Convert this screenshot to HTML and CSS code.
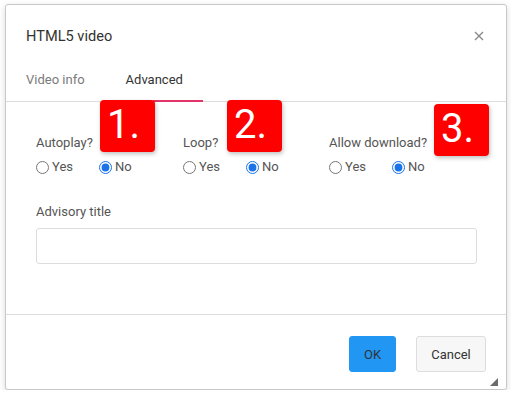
FILE: index.html
```html
<!DOCTYPE html>
<html lang="en">
<head>
  <meta charset="UTF-8" />
  <title>HTML5 video</title>
  <link rel="stylesheet" href="styles.css">
</head>
<body>

<div class="dialog">
  <div class="dialog-header">
    <div class="dialog-title">HTML5 video</div>
    <svg class="close" width="10" height="10" viewBox="0 0 10 10">
      <path d="M1 1L9 9M9 1L1 9" stroke="#8a8a8a" stroke-width="1.4" fill="none"/>
    </svg>
  </div>

  <div class="tabs">
    <div class="tab">Video info</div>
    <div class="tab active">Advanced</div>
  </div>

  <div class="dialog-body">
    <div class="options">
      <div class="option">
        <div class="label">Autoplay?</div>
        <div class="choices">
          <label class="choice"><input type="radio" name="autoplay"> Yes</label>
          <label class="choice"><input type="radio" name="autoplay" checked> No</label>
        </div>
      </div>
      <div class="option">
        <div class="label">Loop?</div>
        <div class="choices">
          <label class="choice"><input type="radio" name="loop"> Yes</label>
          <label class="choice"><input type="radio" name="loop" checked> No</label>
        </div>
      </div>
      <div class="option">
        <div class="label">Allow download?</div>
        <div class="choices">
          <label class="choice"><input type="radio" name="download"> Yes</label>
          <label class="choice"><input type="radio" name="download" checked> No</label>
        </div>
      </div>
    </div>

    <div class="field">
      <div class="label">Advisory title</div>
      <input type="text" class="text-input">
    </div>
  </div>

  <div class="dialog-footer">
    <button class="btn btn-primary">OK</button>
    <button class="btn btn-secondary">Cancel</button>
    <span class="resize"></span>
  </div>
</div>

<div class="badge badge-1">1.</div>
<div class="badge badge-2">2.</div>
<div class="badge badge-3">3.</div>

</body>
</html>
```

FILE: styles.css
```css
* { box-sizing: border-box; }

body {
  margin: 0;
  font-family: Roboto, "Liberation Sans", Arial, sans-serif;
  background: #fff;
  color: #333;
}

.dialog {
  position: relative;
  margin: 4px 0 0 5px;
  width: 502px;
  height: 386px;
  background: white;
  border: 1px solid #c8c8c8;
  border-radius: 3px;
  box-shadow: 0 2px 6px rgba(0,0,0,0.15);
  display: flex;
  flex-direction: column;
}

.dialog-header {
  display: flex;
  justify-content: space-between;
  align-items: flex-start;
  padding: 21px 22px 0 20px;
  height: 51px;
}

.dialog-title {
  font-size: 14.6px;
  line-height: 20px;
  color: #333;
}

.close {
  margin-top: 5px;
}

.tabs {
  display: flex;
  gap: 41px;
  padding: 0 20px;
  height: 46px;
  border-bottom: 1px solid #ddd;
}

.tab {
  position: relative;
  font-size: 13px;
  line-height: 16px;
  padding-top: 16px;
  color: #7a7a7a;
}

.tab.active {
  color: #333;
}

.tab.active::after {
  content: "";
  position: absolute;
  left: 27px;
  width: 50px;
  bottom: -1px;
  height: 2px;
  background: #e2336b;
}

.dialog-body {
  flex: 1;
  padding: 33px 30px 0 30px;
  border-bottom: 1px solid #ddd;
}

.options {
  display: grid;
  grid-template-columns: 147px 146px 147px;
}

.label {
  font-size: 13px;
  line-height: 16px;
  color: #555;
}

.choices {
  display: flex;
  margin-top: 8px;
}

.choice {
  display: flex;
  align-items: center;
  gap: 3px;
  width: 63px;
  font-size: 13px;
  line-height: 16px;
  color: #555;
}

.choice input {
  margin: 0;
  width: 13px;
  height: 13px;
  accent-color: #1a73e8;
}

.field {
  margin-top: 29px;
}

.text-input {
  display: block;
  margin-top: 8px;
  width: 441px;
  height: 36px;
  border: 1px solid #ddd;
  border-radius: 3px;
  font-size: 13px;
}

.dialog-footer {
  position: relative;
  display: flex;
  justify-content: flex-end;
  gap: 20px;
  height: 74px;
  padding: 21px 20px 0 0;
}

.btn {
  height: 36px;
  font-family: Roboto, "Liberation Sans", Arial, sans-serif;
  font-size: 13px;
  color: #333;
  border-radius: 3px;
  padding: 0;
}

.btn-primary {
  width: 47px;
  background: #2196f3;
  border: 1px solid #2196f3;
}

.btn-secondary {
  width: 70px;
  background: #f7f7f7;
  border: 1px solid #ddd;
}

.resize {
  position: absolute;
  right: 8px;
  bottom: 3px;
  width: 0;
  height: 0;
  border-left: 8px solid transparent;
  border-bottom: 8px solid #6b6b6b;
}

.badge {
  position: absolute;
  width: 55px;
  height: 52px;
  background: #ff0000;
  color: white;
  border-radius: 4px;
  box-shadow: 1px 2px 4px rgba(0,0,0,0.25);
  font-family: Roboto, "Liberation Sans", Arial, sans-serif;
  font-size: 40px;
  line-height: 50px;
  padding-left: 7px;
}

.badge-1 { left: 100px; top: 100px; }
.badge-2 { left: 227px; top: 100px; }
.badge-3 { left: 434px; top: 104px; }
```
